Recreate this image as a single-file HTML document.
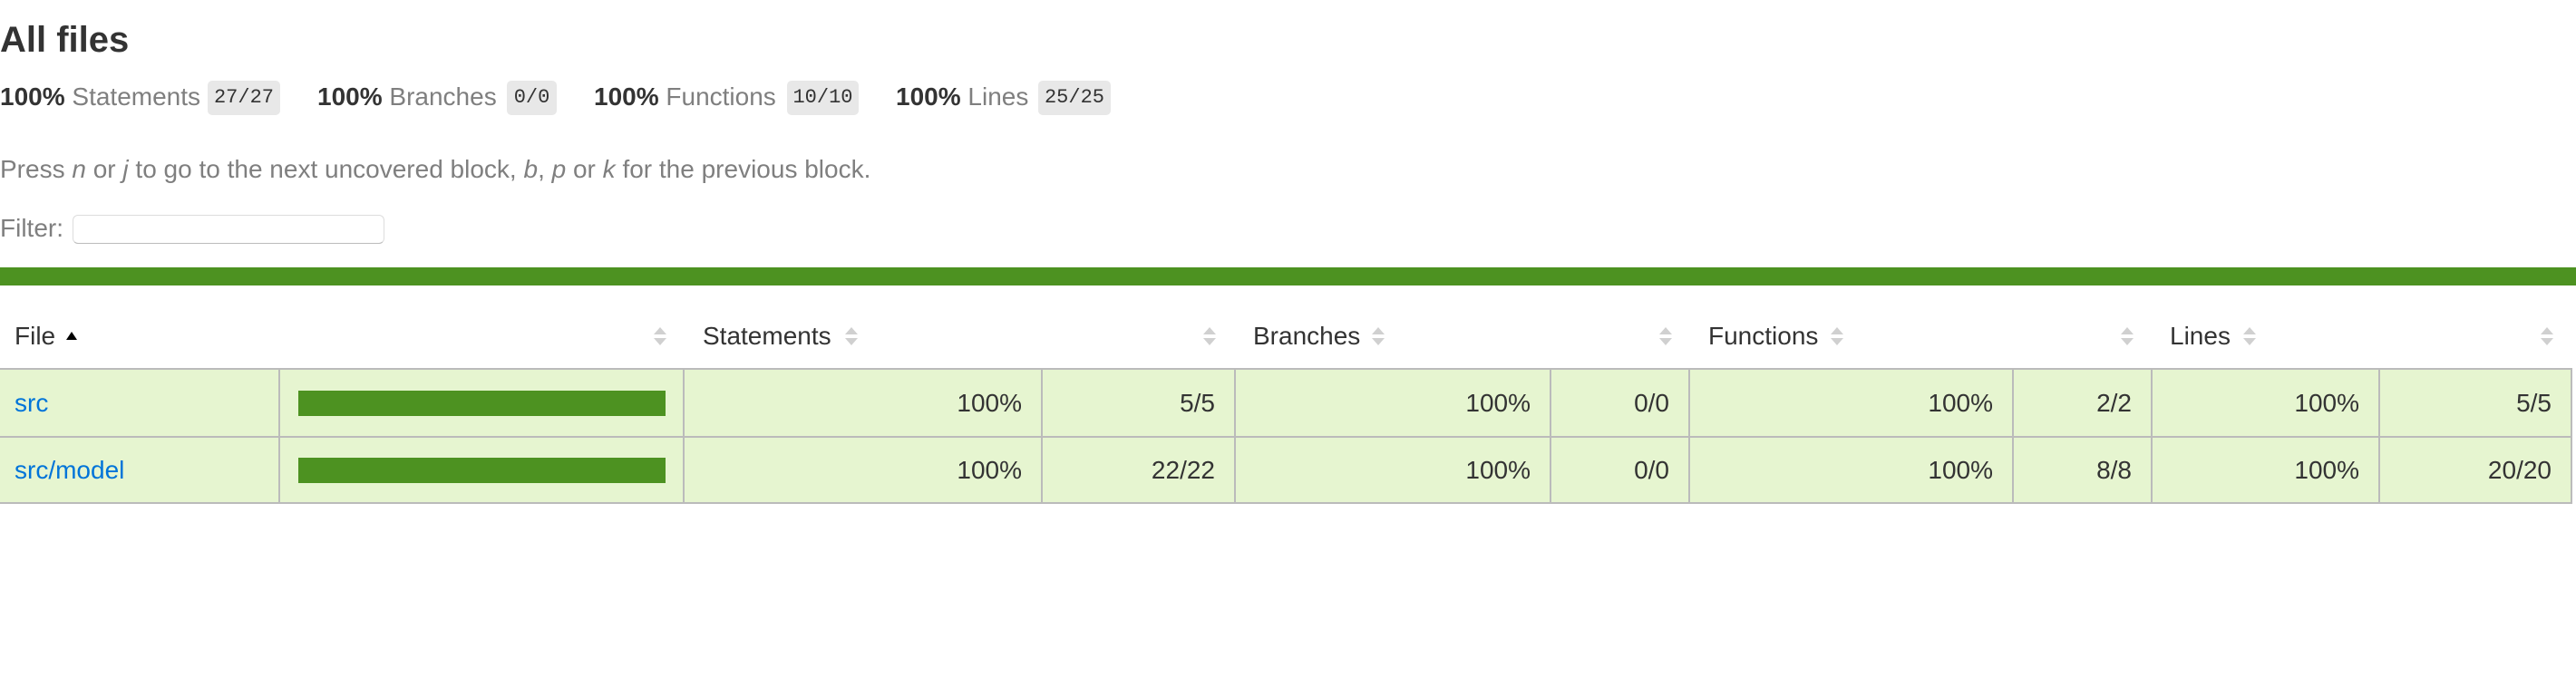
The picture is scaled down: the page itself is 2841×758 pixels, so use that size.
<!DOCTYPE html>
<html><head><meta charset="utf-8"><style>
*{margin:0;padding:0;box-sizing:border-box}
body{width:2841px;height:758px;background:#fff;font-family:"Liberation Sans",Arial,sans-serif;color:#333;position:relative;overflow:hidden}
.a{position:absolute;white-space:nowrap}
h1{position:absolute;left:0;top:20px;font-size:40px;font-weight:bold;line-height:48px;color:#333}
.st{font-size:28px;line-height:32px}
.b{font-weight:bold;color:#333}
.q{color:#7f7f7f}
.badge{position:absolute;top:89px;height:38px;background:#e8e8e8;border-radius:5px;font-family:"Liberation Mono",monospace;font-size:22px;line-height:38px;text-align:center;color:#333}
.s{position:absolute;width:14px;height:20px}
.s:before{content:"";position:absolute;left:0;top:0;border-left:7px solid transparent;border-right:7px solid transparent;border-bottom:8px solid #d0d0d0}
.s:after{content:"";position:absolute;left:0;bottom:0;border-left:7px solid transparent;border-right:7px solid transparent;border-top:8px solid #d0d0d0}
.h{font-size:28px;line-height:32px;color:#333;top:355px}
.row{position:absolute;left:0;width:2837px;background:#e6f5d0;border-bottom:2px solid #bbb}
.vl{position:absolute;top:408px;height:148px;width:2px;background:#bbb}
.c{position:absolute;font-size:28px;line-height:32px;color:#333;text-align:right}
.bar{position:absolute;left:329px;width:405px;height:28px;background:#4d9221}
a{color:#0074d9;text-decoration:none}
</style></head><body>
<h1>All files</h1>
<div class="a st" style="left:0;top:91px"><span class="b">100%</span> <span class="q">Statements</span></div>
<div class="badge" style="left:229px;width:80px">27/27</div>
<div class="a st" style="left:350px;top:91px"><span class="b">100%</span> <span class="q">Branches</span></div>
<div class="badge" style="left:559px;width:55px">0/0</div>
<div class="a st" style="left:655px;top:91px"><span class="b">100%</span> <span class="q">Functions</span></div>
<div class="badge" style="left:868px;width:79px">10/10</div>
<div class="a st" style="left:988px;top:91px"><span class="b">100%</span> <span class="q">Lines</span></div>
<div class="badge" style="left:1145px;width:80px">25/25</div>
<div class="a st q" style="left:0;top:171px">Press <i>n</i> or <i>j</i> to go to the next uncovered block, <i>b</i>, <i>p</i> or <i>k</i> for the previous block.</div>
<div class="a st q" style="left:0;top:236px">Filter:</div>
<div class="a" style="left:80px;top:237px;width:344px;height:32px;border:1px solid #ddd;border-bottom-color:#bbb;border-radius:6px"></div>
<div class="a" style="left:0;top:295px;width:2841px;height:20px;background:#4d9221"></div>

<div class="a h" style="left:16px">File</div>
<div class="a" style="left:73px;top:366px;border-left:6px solid transparent;border-right:6px solid transparent;border-bottom:9px solid #000"></div>
<div class="s" style="left:721px;top:361px"></div>
<div class="a h" style="left:775px">Statements</div>
<div class="s" style="left:932px;top:361px"></div>
<div class="s" style="left:1327px;top:361px"></div>
<div class="a h" style="left:1382px">Branches</div>
<div class="s" style="left:1513px;top:361px"></div>
<div class="s" style="left:1830px;top:361px"></div>
<div class="a h" style="left:1884px">Functions</div>
<div class="s" style="left:2019px;top:361px"></div>
<div class="s" style="left:2339px;top:361px"></div>
<div class="a h" style="left:2393px">Lines</div>
<div class="s" style="left:2474px;top:361px"></div>
<div class="s" style="left:2802px;top:361px"></div>

<div class="a" style="left:0;top:406px;width:2837px;height:2px;background:#bbb"></div>
<div class="row" style="top:408px;height:75px"></div>
<div class="row" style="top:483px;height:73px"></div>
<div class="vl" style="left:307px"></div>
<div class="vl" style="left:753px"></div>
<div class="vl" style="left:1148px"></div>
<div class="vl" style="left:1361px"></div>
<div class="vl" style="left:1709px"></div>
<div class="vl" style="left:1862px"></div>
<div class="vl" style="left:2219px"></div>
<div class="vl" style="left:2372px"></div>
<div class="vl" style="left:2623px"></div>
<div class="vl" style="left:2835px"></div>

<div class="c" style="left:16px;top:429px;text-align:left"><a>src</a></div>
<div class="bar" style="top:431px"></div>
<div class="c" style="left:754px;width:373px;top:429px">100%</div>
<div class="c" style="left:1149px;width:191px;top:429px">5/5</div>
<div class="c" style="left:1362px;width:326px;top:429px">100%</div>
<div class="c" style="left:1710px;width:131px;top:429px">0/0</div>
<div class="c" style="left:1863px;width:335px;top:429px">100%</div>
<div class="c" style="left:2220px;width:131px;top:429px">2/2</div>
<div class="c" style="left:2373px;width:229px;top:429px">100%</div>
<div class="c" style="left:2624px;width:190px;top:429px">5/5</div>

<div class="c" style="left:16px;top:503px;text-align:left"><a>src/model</a></div>
<div class="bar" style="top:505px"></div>
<div class="c" style="left:754px;width:373px;top:503px">100%</div>
<div class="c" style="left:1149px;width:191px;top:503px">22/22</div>
<div class="c" style="left:1362px;width:326px;top:503px">100%</div>
<div class="c" style="left:1710px;width:131px;top:503px">0/0</div>
<div class="c" style="left:1863px;width:335px;top:503px">100%</div>
<div class="c" style="left:2220px;width:131px;top:503px">8/8</div>
<div class="c" style="left:2373px;width:229px;top:503px">100%</div>
<div class="c" style="left:2624px;width:190px;top:503px">20/20</div>
</body></html>
